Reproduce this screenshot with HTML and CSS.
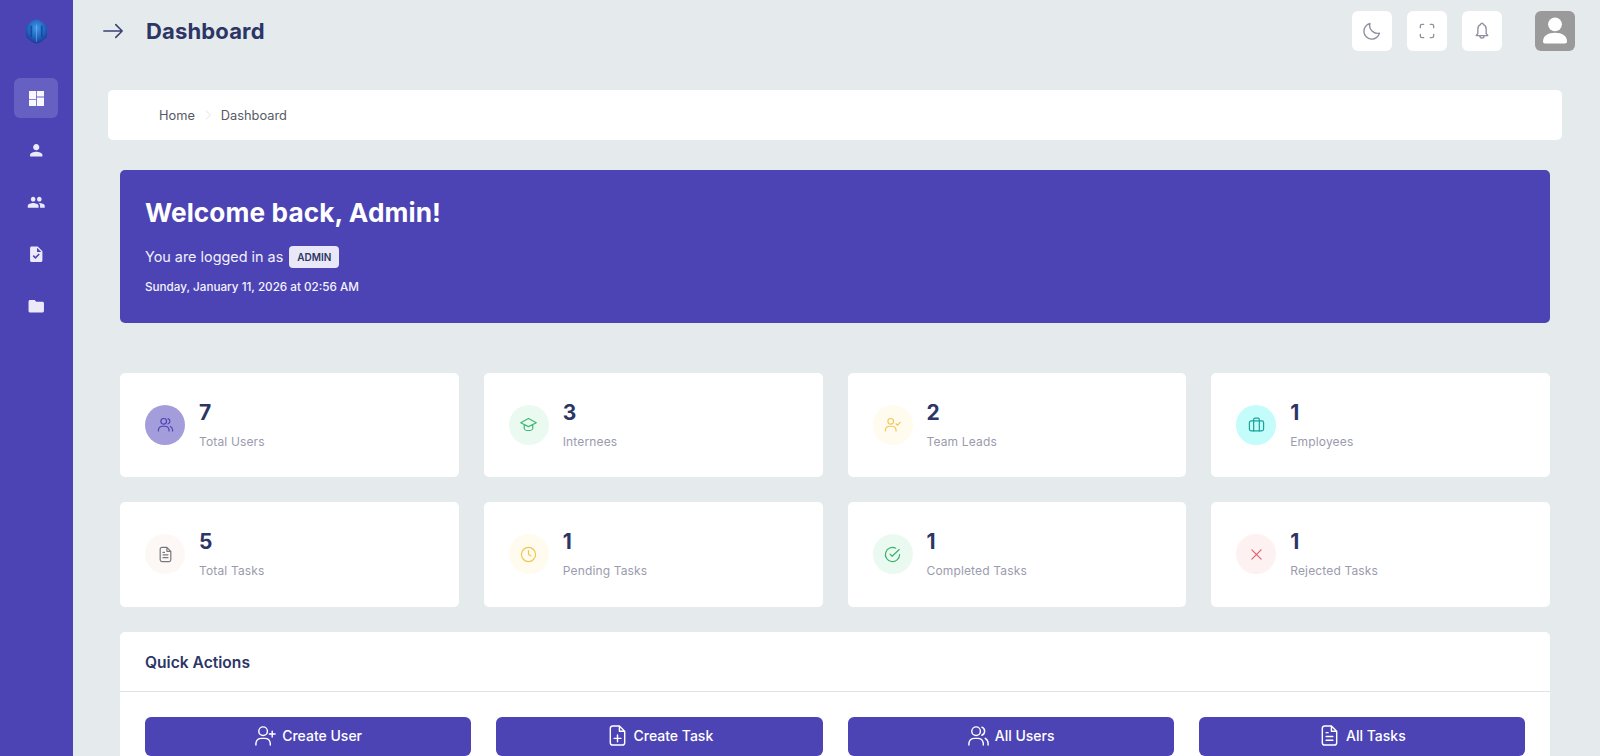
FILE: index.html
```html
<!DOCTYPE html>
<html lang="en">
<head>
<meta charset="utf-8">
<title>Dashboard</title>
<link rel="stylesheet" href="styles.css">
</head>
<body>
<svg class="defs" width="0" height="0" aria-hidden="true">
  <defs>
    <radialGradient id="logoFill" cx="0.5" cy="0.35" r="0.7"><stop offset="0" stop-color="#3f97e6"/><stop offset="0.6" stop-color="#1f62bd"/><stop offset="1" stop-color="#1a2f8c"/></radialGradient>
  </defs>
</svg>
<div class="app">
  <aside class="sidebar">
    <div class="logo">
      <svg viewBox="0 0 24 26" width="23" height="25">
        <path d="M12 .5c2 0 4 1 6 2.500l3.500 3c1 1 1.500 2 1.500 3.500v7c0 1.500-.5 2.500-1.500 3.500L18 23c-2 1.500-4 2.500-6 2.500S8 24.500 6 23l-3.500-3C1.500 19 1 18 1 16.500v-7C1 8 1.500 7 2.500 6L6 3c2-1.500 4-2.500 6-2.500z" fill="url(#logoFill)"/>
        <path d="M6.500 7v12M17.500 7v12" stroke="#173a9a" stroke-width="1.800" fill="none" opacity=".7"/>
        <path d="M12 6v18" stroke="#8fc4f2" stroke-width=".8" fill="none" opacity=".6"/>
      </svg>
    </div>
    <nav class="nav">
      <a class="nav-item active"><svg viewBox="0 0 15 15"><path d="M0 0h7.100v8.200H0zM7.900 0H15v5.600H7.900zM7.900 6.400H15V15H7.900zM0 9h7.100v6H0z"/></svg></a>
      <a class="nav-item"><svg viewBox="0 0 24 24"><path d="M12 12c2.210 0 4-1.790 4-4s-1.790-4-4-4-4 1.790-4 4 1.790 4 4 4zm0 2c-2.670 0-8 1.340-8 4v2h16v-2c0-2.660-5.330-4-8-4z"/></svg></a>
      <a class="nav-item"><svg viewBox="0 0 24 24"><path d="M16 11c1.660 0 2.990-1.340 2.990-3S17.660 5 16 5c-1.660 0-3 1.340-3 3s1.340 3 3 3zm-8 0c1.660 0 2.990-1.340 2.990-3S9.660 5 8 5C6.340 5 5 6.340 5 8s1.340 3 3 3zm0 2c-2.330 0-7 1.170-7 3.500V19h14v-2.500c0-2.330-4.670-3.500-7-3.500zm8 0c-.290 0-.620.020-.970.050 1.160.840 1.970 1.970 1.970 3.450V19h6v-2.500c0-2.330-4.670-3.500-7-3.500z"/></svg></a>
      <a class="nav-item"><svg viewBox="0 0 24 24"><path d="M14 2H6c-1.100 0-1.990.900-1.990 2L4 20c0 1.100.890 2 1.990 2H18c1.100 0 2-.900 2-2V8l-6-6zm-3.060 16L7.400 14.460l1.410-1.410 2.120 2.120 4.240-4.240 1.410 1.410L10.940 18zM13 9V3.500L18.500 9H13z"/></svg></a>
      <a class="nav-item"><svg viewBox="0 0 24 24"><path d="M10 4H4c-1.100 0-1.990.900-1.990 2L2 18c0 1.100.900 2 2 2h16c1.100 0 2-.900 2-2V8c0-1.100-.900-2-2-2h-8l-2-2z"/></svg></a>
    </nav>
  </aside>

  <main class="main">
    <header class="topbar">
      <svg class="back line" viewBox="0 0 24 24"><path d="M2 12h20M15 5l7 7-7 7"/></svg>
      <h1 class="page-title">Dashboard</h1>
      <div class="tools">
        <button class="tool"><svg class="line" viewBox="0 0 24 24"><path d="M21 14.500A9.500 9.500 0 0 1 9.500 3 9.500 9.500 0 1 0 21 14.500z"/></svg></button>
        <button class="tool"><svg class="line" viewBox="0 0 24 24"><path d="M8 4H6a2 2 0 0 0-2 2v2M16 4h2a2 2 0 0 1 2 2v2M8 20H6a2 2 0 0 1-2-2v-2M16 20h2a2 2 0 0 0 2-2v-2"/></svg></button>
        <button class="tool"><svg class="line" viewBox="0 0 24 24"><path d="M12 2.500a1.500 1.500 0 0 1 1.500 1.500 6 6 0 0 1 3.500 5.500V15l2 2.500H5L7 15V9.500A6 6 0 0 1 10.500 4 1.500 1.500 0 0 1 12 2.500zM9.500 18a2.500 2.500 0 0 0 5 0"/></svg></button>
        <div class="avatar"><svg viewBox="0 0 40 40"><circle cx="20" cy="13.300" r="6.900"/><path d="M10 32.500c-1.200 0-2-.8-2-2 0-6 5-8.800 12-8.800s12 2.800 12 8.800c0 1.200-.8 2-2 2z"/></svg></div>
      </div>
    </header>

    <div class="breadcrumb">
      <span>Home</span>
      <svg class="crumb-sep line" viewBox="0 0 24 24"><path d="M9 5l7 7-7 7"/></svg>
      <span>Dashboard</span>
    </div>

    <section class="content">
      <div class="welcome">
        <h2>Welcome back, Admin!</h2>
        <p class="role">You are logged in as <span class="badge">ADMIN</span></p>
        <p class="date">Sunday, January 11, 2026 at 02:56 AM</p>
      </div>

      <div class="stats">
        <div class="stat"><div class="ico c-purple"><svg class="line" viewBox="0 0 24 24"><circle cx="9.500" cy="7.500" r="4"/><path d="M2 21v-1.500a6 6 0 0 1 6-5h3a6 6 0 0 1 6 5V21M15.500 3.700a4 4 0 0 1 0 7.600M19 14.800a6 6 0 0 1 3 5V21"/></svg></div><div class="stat-body"><div class="num">7</div><div class="lbl">Total Users</div></div></div>
        <div class="stat"><div class="ico c-green"><svg class="line" viewBox="0 0 24 24"><path d="M12 3.500L23 9.500l-11 5.500L1 9.500zM6 12.500v5c0 1.500 3 3 6 3s6-1.500 6-3v-5"/></svg></div><div class="stat-body"><div class="num">3</div><div class="lbl">Internees</div></div></div>
        <div class="stat"><div class="ico c-yellow"><svg class="line" viewBox="0 0 24 24"><circle cx="9.500" cy="7.500" r="4"/><path d="M2 21v-1.500a6 6 0 0 1 6-5h3a6 6 0 0 1 6 5V21M17 11l2 2 4-4"/></svg></div><div class="stat-body"><div class="num">2</div><div class="lbl">Team Leads</div></div></div>
        <div class="stat"><div class="ico c-teal"><svg class="line" viewBox="0 0 24 24"><rect x="2" y="7" width="20" height="14" rx="2.500"/><path d="M8 21V5a2 2 0 0 1 2-2h4a2 2 0 0 1 2 2v16"/></svg></div><div class="stat-body"><div class="num">1</div><div class="lbl">Employees</div></div></div>
        <div class="stat"><div class="ico c-grey"><svg class="line" viewBox="0 0 24 24"><path d="M14 2H7a2.500 2.500 0 0 0-2.500 2.500v15A2.500 2.500 0 0 0 7 22h10a2.500 2.500 0 0 0 2.500-2.500V7.500zM14 2v5.500h5.500M8.500 12.500h7M8.500 16.500h7M8.500 9h2"/></svg></div><div class="stat-body"><div class="num">5</div><div class="lbl">Total Tasks</div></div></div>
        <div class="stat"><div class="ico c-amber"><svg class="line" viewBox="0 0 24 24"><circle cx="12" cy="12" r="10"/><path d="M12 6.500V12l3.500 2"/></svg></div><div class="stat-body"><div class="num">1</div><div class="lbl">Pending Tasks</div></div></div>
        <div class="stat"><div class="ico c-lime"><svg class="line" viewBox="0 0 24 24"><path d="M22 12a10 10 0 1 1-5.500-8.900M8.500 11.500l3 3L21.500 5"/></svg></div><div class="stat-body"><div class="num">1</div><div class="lbl">Completed Tasks</div></div></div>
        <div class="stat"><div class="ico c-red"><svg class="line" viewBox="0 0 24 24"><path d="M5.500 5.500l13 13M18.500 5.500l-13 13"/></svg></div><div class="stat-body"><div class="num">1</div><div class="lbl">Rejected Tasks</div></div></div>
      </div>

      <div class="quick">
        <h3 class="quick-head">Quick Actions</h3>
        <div class="quick-body">
          <a class="action"><svg class="line" viewBox="0 0 24 24"><circle cx="9.500" cy="7.500" r="4.500"/><path d="M2 22v-2a6 6 0 0 1 6-5h3a6 6 0 0 1 6 5v2M19 7.500v6M16 10.500h6"/></svg>Create User</a>
          <a class="action"><svg class="line" viewBox="0 0 24 24"><path d="M14 2H7a2.500 2.500 0 0 0-2.500 2.500v15A2.500 2.500 0 0 0 7 22h10a2.500 2.500 0 0 0 2.500-2.500V7.500zM14 2v5.500h5.500M12 11.500v7M8.500 15h7"/></svg>Create Task</a>
          <a class="action"><svg class="line" viewBox="0 0 24 24"><circle cx="9.500" cy="7.500" r="4.500"/><path d="M2 22v-2a6 6 0 0 1 6-5h3a6 6 0 0 1 6 5v2M15.500 3.300a4.500 4.500 0 0 1 0 8.400M19 15a6 6 0 0 1 3 5v2"/></svg>All Users</a>
          <a class="action"><svg class="line" viewBox="0 0 24 24"><path d="M14 2H7a2.500 2.500 0 0 0-2.500 2.500v15A2.500 2.500 0 0 0 7 22h10a2.500 2.500 0 0 0 2.500-2.500V7.500zM14 2v5.500h5.500M8.500 13h7M8.500 17h7M8.500 9h2"/></svg>All Tasks</a>
        </div>
      </div>
    </section>
  </main>
</div>
</body>
</html>
```

FILE: styles.css
```css
* { box-sizing: border-box; margin: 0; padding: 0; }
html, body { height: 756px; overflow: hidden; }
body { background: #e5eaec; font-family: "Inter", "Open Sans", sans-serif; color: #2c3566; }
.defs { position: absolute; }
.line { fill: none; stroke: currentColor; stroke-width: 1.7; stroke-linecap: round; stroke-linejoin: round; }

.app { display: flex; height: 756px; }

.sidebar { width: 73px; flex: none; background: #4c44b4; display: flex; flex-direction: column; align-items: center; padding-right: 1px; }
.logo { height: 78px; display: flex; align-items: flex-start; padding-top: 19px; justify-content: center; }
.nav { display: flex; flex-direction: column; gap: 12px; }
.nav-item { width: 44px; height: 40px; border-radius: 6px; display: flex; align-items: center; justify-content: center; }
.nav-item svg { width: 18.5px; height: 18.5px; fill: #eceafa; }
.nav-item.active { background: #6660c2; }
.nav-item.active svg { fill: #f8f7fd; width: 15px; height: 15px; }

.main { flex: 1; min-width: 0; padding: 0 38px 0 35px; }

.topbar { height: 62px; margin-bottom: 28px; display: flex; align-items: center; }
.back { width: 22px; height: 22px; color: #3a4274; margin-left: -6px; flex: none; }
.page-title { font-size: 22px; font-weight: 700; color: #2c3566; margin-left: 22px; letter-spacing: .15px; }
.tools { margin-left: auto; margin-right: -13px; display: flex; gap: 15px; align-items: center; }
.tool { width: 40px; height: 40px; border: 0; background: #fff; border-radius: 6px; display: flex; align-items: center; justify-content: center; color: #8f8fa0; }
.tool svg { width: 20px; height: 20px; stroke-width: 1.6; }
.avatar { width: 40px; height: 40px; border-radius: 6px; background: #9a9a9a; margin-left: 18px; }
.avatar svg { display: block; width: 40px; height: 40px; fill: #fff; }

.breadcrumb { height: 50px; background: #fff; border-radius: 5px; display: flex; align-items: center; padding-left: 51px; font-size: 12.8px; color: #555a66; }
.crumb-sep { width: 14px; height: 14px; color: #e3e3e8; margin: 0 6px; }

.content { padding: 29.5px 12px 0; }

.welcome { height: 153px; background: #4c44b4; border-radius: 5px; padding: 27px 25px 0; color: #fff; }
.welcome h2 { font-size: 26.2px; font-weight: 700; line-height: 32px; letter-spacing: .1px; }
.role { font-size: 14.4px; margin-top: 16px; line-height: 24px; color: #f1f0fb; display: flex; align-items: center; gap: 6px; }
.badge { background: #e9e8f8; color: #2c3566; font-size: 10px; font-weight: 600; height: 22px; padding: 0 8px; border-radius: 4px; display: inline-flex; align-items: center; }
.date { font-size: 11.7px; font-weight: 500; margin-top: 9px; line-height: 18px; color: #f4f3fc; }

.stats { margin-top: 50px; display: grid; grid-template-columns: repeat(4, 1fr); gap: 25px; }
.stat { height: 104.5px; background: #fff; border-radius: 5px; padding: 32px 25px 0; display: flex; gap: 14px; align-items: flex-start; }
.ico { width: 40px; height: 40px; border-radius: 50%; flex: none; display: flex; align-items: center; justify-content: center; }
.ico svg { width: 17px; height: 17px; stroke-width: 1.7; }
.stat-body { margin-top: -6px; }
.num { font-size: 21px; font-weight: 700; line-height: 28px; color: #2c3566; }
.lbl { font-size: 12px; line-height: 18px; margin-top: 6px; color: #9b9bae; letter-spacing: .15px; }

.c-purple { background: #a39edb; color: #4c44b4; }
.c-green { background: #ebfaf1; color: #3dbb74; }
.c-yellow { background: #fffcef; color: #f1c75b; }
.c-teal { background: #c4fbfb; color: #16a596; }
.c-grey { background: #fdf8f6; color: #77777f; }
.c-amber { background: #fffbef; color: #eec64f; }
.c-lime { background: #ebfaf1; color: #39b26c; }
.c-red { background: #fdf1f1; color: #e4606d; }

.quick { margin-top: 25px; background: #fff; border-radius: 5px; }
.quick-head { height: 60px; border-bottom: 1px solid #dfe3e8; display: flex; align-items: center; padding: 2px 0 0 25px; font-size: 15.6px; font-weight: 600; color: #2c3566; }
.quick-body { padding: 25px; display: grid; grid-template-columns: repeat(4, 1fr); gap: 25px; }
.action { height: 39px; background: #4c44b4; border-radius: 6px; color: #fff; font-size: 14px; font-weight: 500; display: flex; align-items: center; justify-content: center; gap: 5px; padding-bottom: 1px; }
.action svg { width: 23px; height: 23px; stroke-width: 1.5; }
```
